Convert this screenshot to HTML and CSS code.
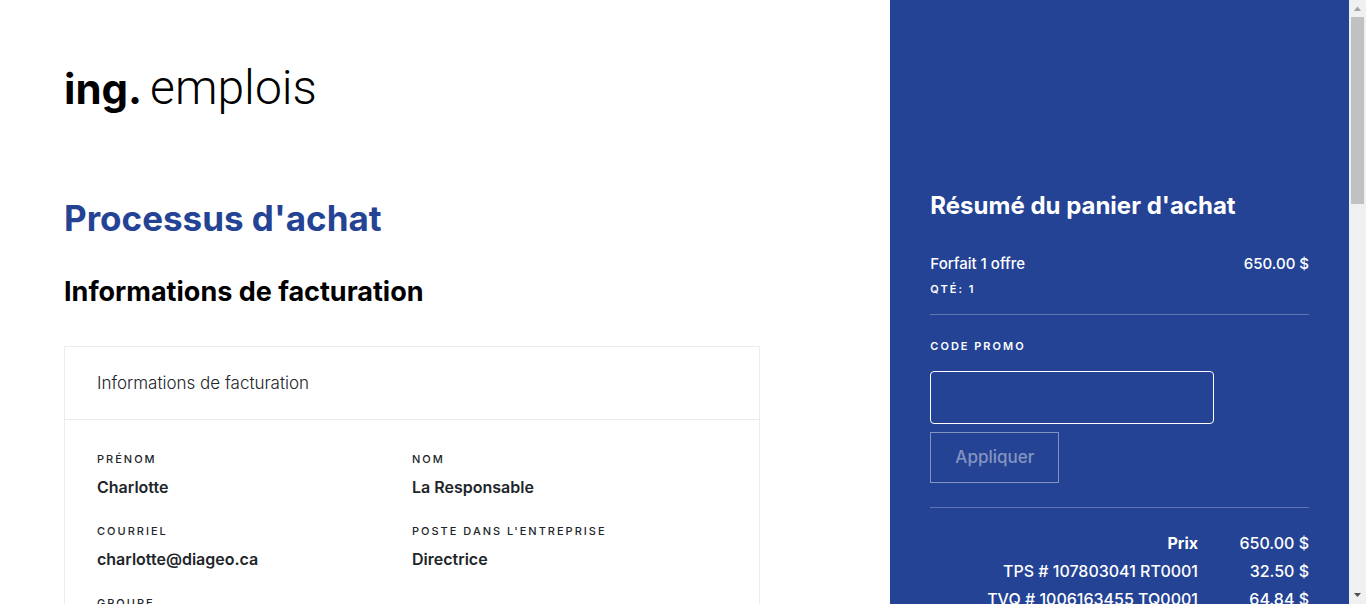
FILE: index.html
```html
<!DOCTYPE html>
<html lang="fr">
<head>
<meta charset="utf-8">
<meta name="viewport" content="width=device-width, initial-scale=1">
<title>Processus d'achat</title>
<link rel="stylesheet" href="styles.css">
</head>
<body>
<div class="window">
  <div class="page">
    <main class="main">
      <div class="logo"><span class="logo-mark">ing.</span><span class="logo-name">emplois</span></div>
      <h1 class="title">Processus d'achat</h1>
      <h2 class="subtitle">Informations de facturation</h2>
      <section class="card">
        <header class="card-header">Informations de facturation</header>
        <dl class="fields">
          <div class="field"><dt>Prénom</dt><dd>Charlotte</dd></div>
          <div class="field"><dt>Nom</dt><dd>La Responsable</dd></div>
          <div class="field"><dt>Courriel</dt><dd>charlotte@diageo.ca</dd></div>
          <div class="field"><dt>Poste dans l'entreprise</dt><dd>Directrice</dd></div>
          <div class="field"><dt>Groupe</dt></div>
        </dl>
      </section>
    </main>
    <aside class="cart">
      <h2 class="cart-title">Résumé du panier d'achat</h2>
      <div class="item"><span>Forfait 1 offre</span><span>650.00 $</span></div>
      <div class="quantity">Qté: 1</div>
      <form class="promo">
        <label class="promo-label" for="promo">Code promo</label>
        <input class="promo-input" id="promo" type="text">
        <button class="promo-button" type="button" disabled>Appliquer</button>
      </form>
      <table class="totals">
        <tr><th class="strong" scope="row">Prix</th><td>650.00 $</td></tr>
        <tr><th scope="row">TPS # 107803041 RT0001</th><td>32.50 $</td></tr>
        <tr><th scope="row">TVQ # 1006163455 TQ0001</th><td>64.84 $</td></tr>
      </table>
    </aside>
  </div>
  <div class="scrollbar" aria-hidden="true">
    <svg class="arrow arrow-up" viewBox="0 0 17 17"><path d="M5 11L8.500 6.500L12 11Z"/></svg>
    <div class="thumb"></div>
    <svg class="arrow arrow-down" viewBox="0 0 17 17"><path d="M5 6L8.500 10L12 6Z"/></svg>
  </div>
</div>
</body>
</html>
```
FILE: styles.css
```css
* { box-sizing: border-box; }
body {
  margin: 0;
  font: 16px/24px Inter, "Open Sans", sans-serif;
  color: #212529;
  background: #fff;
}
h1, h2, dl, dd { margin: 0; }
.window { display: flex; height: 100vh; overflow: hidden; }
.page { display: flex; flex: 1; min-width: 0; overflow: hidden; }

.main { flex: 1; min-width: 0; padding: 56px 64px 0; }
.logo {
  display: flex;
  align-items: baseline;
  gap: 8px;
  margin-bottom: 73px;
  color: #000;
  line-height: 64px;
}
.logo-mark { font-size: 42px; font-weight: 700; }
.logo-name { font-family: Roboto, sans-serif; font-size: 48px; font-weight: 300; }
.title { margin-bottom: 34px; font-size: 35px; line-height: 48px; font-weight: 700; color: #244395; }
.subtitle { margin-bottom: 38px; font-size: 27px; line-height: 32px; font-weight: 700; color: #000; }

.card { max-width: 696px; border: 1px solid #ececec; }
.card-header { padding: 24px 32px; border-bottom: 1px solid #ececec; font-size: 17px; font-weight: 300; }
.fields {
  display: grid;
  grid-template-columns: 1fr 1fr;
  row-gap: 24px;
  padding: 31px 32px;
}
.field dt, .quantity, .promo-label {
  font-size: 11px;
  line-height: 16px;
  font-weight: 500;
  letter-spacing: 2px;
  text-transform: uppercase;
}
.field dt { margin-bottom: 8px; }
.field dd { font-weight: 600; }

.cart { flex: 0 0 34%; padding: 190px 40px 0; color: #fff; background: #244395; }
.cart-title { margin-bottom: 30px; font-size: 24px; line-height: 32px; font-weight: 700; }
.item { display: flex; justify-content: space-between; font-size: 15px; font-weight: 500; }
.quantity { margin: 5px 0 17px; font-weight: 600; }
.promo {
  padding: 23px 0 24px;
  border-top: 1px solid #5e75b1;
  border-bottom: 1px solid #5e75b1;
}
.promo-label { display: block; margin-bottom: 17px; font-weight: 600; }
.promo-input {
  display: block;
  width: 75%;
  height: 53px;
  margin-bottom: 8px;
  padding: 0 16px;
  border: 1px solid #fff;
  border-radius: 4px;
  background: transparent;
  color: #fff;
  font: inherit;
}
.promo-button {
  display: block;
  padding: 12px 24px 13px;
  border: 1px solid #8594c0;
  background: transparent;
  color: #8594c0;
  font: inherit;
  font-size: 17px;
  font-weight: 500;
}
.totals { width: 100%; margin-top: 21px; border-collapse: collapse; font-size: 16px; line-height: 28px; }
.totals th, .totals td { padding: 0; font-weight: 500; text-align: right; white-space: nowrap; }
.totals .strong { font-weight: 700; }
.totals td { width: 111px; }

.scrollbar { display: flex; flex-direction: column; flex: 0 0 17px; background: #f0f0f0; }
.arrow { width: 17px; height: 17px; }
.arrow-up { fill: #a3a3a3; }
.arrow-down { margin-top: auto; fill: #505050; }
.thumb { height: 31%; margin: 0 2px; background: #c1c1c1; }
```
